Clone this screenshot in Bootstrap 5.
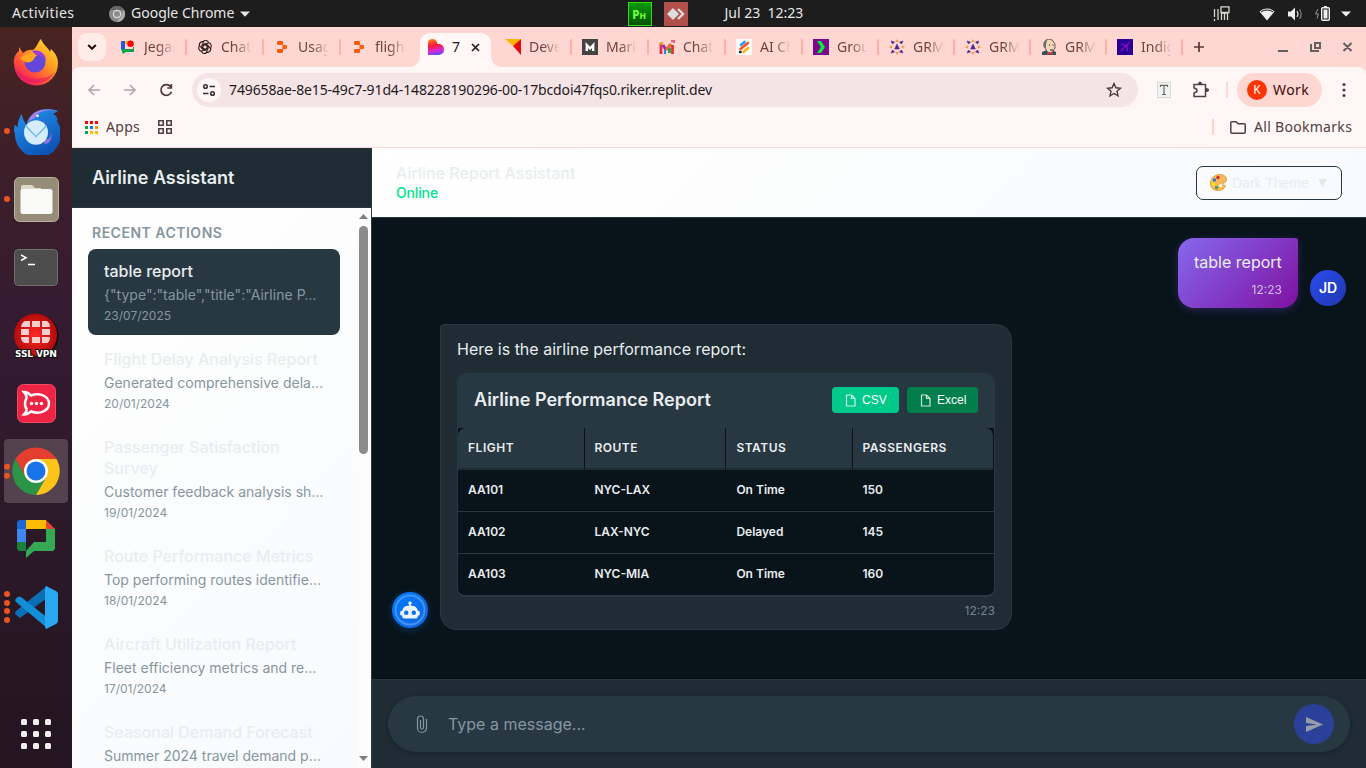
<!DOCTYPE html>
<html lang="en">
<head>
<meta charset="utf-8">
<meta name="viewport" content="width=device-width, initial-scale=1">
<title>Airline Report Assistant</title>
<link href="https://cdn.jsdelivr.net/npm/bootstrap@5.3.0/dist/css/bootstrap.min.css" rel="stylesheet">
<style>
  body{height:768px;font-family:Inter,"Liberation Sans",sans-serif;background:#08131a;color:#e9edef}
  svg{display:block;flex:none}
  .sys{font-family:"Noto Sans","Open Sans",sans-serif}
  /* system bar */
  .topbar{height:27px;background:#1d1d1d;color:#e6e6e6;font-size:14px;line-height:25px;white-space:pre}
  .topbar>*{flex:none}
  .topbar span{padding-bottom:2px}
  /* dock */
  .dock{width:72px;background:linear-gradient(#482421 0,#3e1f29 17%,#351b31 40%,#2c1929 65%,#231521 100%);flex:none}
  .slot{height:68px;width:72px;flex:none;display:flex;align-items:center;justify-content:center;position:relative}
  .slot.on::before{content:"";position:absolute;left:4px;top:2px;width:64px;height:64px;border-radius:4px;background:#54424f}
  .slot svg{position:relative}
  .dots{position:absolute;left:4px;top:50%;transform:translateY(-50%);display:grid;gap:2.6px;z-index:1}
  .dots i{width:6px;height:6px;border-radius:50%;background:#e95420}
  /* tabs */
  .tabs{height:40px;background:#ffd7d2;color:#6f4240;font-size:14px}
  .tb{width:77px;height:40px;padding-left:10px;flex:none;position:relative}
  .tb.n{width:76px}
  .tb b{font-weight:400;width:31px;margin-left:8px;padding-bottom:2px;overflow:hidden;white-space:nowrap;-webkit-mask-image:linear-gradient(90deg,#000 45%,transparent);mask-image:linear-gradient(90deg,#000 45%,transparent)}
  .tb::after{content:"";position:absolute;right:0;top:12px;width:2px;height:16px;background:#ffb0a7;border-radius:1px}
  .tb.x::after{display:none}
  .tb-active{width:71px;height:34px;margin:6px 4px 0 2px;padding:0 0 6px 8px;background:#fff7f5;border-radius:10px 10px 0 0;color:#201a1a;position:relative;flex:none;z-index:1}
  .tb-active::before,.tb-active::after{content:"";position:absolute;bottom:0;width:10px;height:10px}
  .tb-active::before{left:-10px;background:radial-gradient(circle at 0 0,transparent 9.5px,#fff7f5 10px)}
  .tb-active::after{right:-10px;background:radial-gradient(circle at 100% 0,transparent 9.5px,#fff7f5 10px)}
  .drop{width:28px;height:28px;border-radius:9px;background:#ffebe8;margin:0 4px 0 6px}
  .toolwrap{background:#ffd7d2}
  .toolbar{height:81px;background:#fff7f5;border-bottom:1px solid #fad9d6;border-radius:8px 8px 0 0;color:#51403f;font-size:14px}
  .omni{width:946px;height:34px;border-radius:17px;background:#f4e4e6;color:#1f1a1b;padding-left:5px}
  .omni .circ{width:24px;height:24px;border-radius:50%;background:#fff7f5}
  .omni .url{padding:0 0 2px 8px;letter-spacing:-.125px}
  .work{width:85px;height:34px;border-radius:17px;background:#ffd7d2;color:#400a08;padding-left:10px}
  .work em{width:20px;height:20px;border-radius:50%;background:#ff3405;color:#fff;font-size:12px;font-style:normal;margin-right:6px}
  .work span{padding-bottom:2px;letter-spacing:.4px}
  .apps,.allb{padding:0 0 2px 8px}
  .allb{width:120px;letter-spacing:.3px}
  .vsep{width:2px;height:16px;background:#ffd0cb;flex:none}
  /* sidebar */
  .side{width:300px;border-right:1px solid #283842;background:linear-gradient(135deg,#fff,#f8fafc);flex:none}
  .side-head{height:60px;background:#1f2c34;border-bottom:1px solid #283842;padding:0 20px;font-size:18px;font-weight:600;flex:none}
  .side-list{padding:15px 16px 0;width:284px}
  .side-list h2{font-size:14px;font-weight:600;letter-spacing:.5px;line-height:20px;margin:0 0 6px 4px;color:#8696a0}
  .item{width:252px;padding:12px 16px 10px;border-radius:8px;margin-bottom:2px;white-space:nowrap}
  .item.sel{background:#283842}
  .item h3{font-size:16px;font-weight:500;line-height:21px;margin:0 0 2px;color:#e9edef}
  .item p{font-size:14px;line-height:22px;margin:0;color:#8696a0}
  .item.sel p{letter-spacing:.03px}
  .item small{display:block;font-size:12px;line-height:19px;color:#8696a0}
  .sbar{width:15px;background:#fcfcfc}
  .sbar .thumb{width:9px;height:228px;border-radius:5px;background:#8b8b8b;margin-top:4px}
  /* main pane */
  .main-head{height:70px;background:linear-gradient(135deg,#fff,#f8fafc);border-bottom:1px solid #283842;padding:0 24px}
  .main-head h1{font-size:16px;font-weight:500;line-height:20px;margin:0 0 1px;color:#e9edef}
  .main-head .who{padding-bottom:1px}
  .online{font-size:14px;font-weight:500;line-height:18px;color:#00e58d;letter-spacing:-.15px}
  .theme{width:146px;height:34px;border:1px solid #283842;border-radius:7px;font-family:"Liberation Sans",sans-serif;font-size:14px;color:#e9edef;padding-left:13px}
  .theme span{padding:1px 0 0 5px;width:91px}
  .chat{background:#08131a;height:461px;padding:20px 20px 0}
  .bub-me{width:120px;height:70px;padding:12px 16px 0;border-radius:16px 3px 16px 16px;background:linear-gradient(135deg,#8668ee,#7f11a0);box-shadow:0 2px 8px rgba(120,80,230,.3);font-size:16px;line-height:24px}
  .bub-me div{font-size:12px;line-height:18px;margin-top:7px;opacity:.75;text-align:right}
  .ava{width:36px;height:36px;border-radius:50%;flex:none;margin-bottom:2px}
  .ava.me{background:linear-gradient(135deg,#2b4bee,#2038b0);font-size:14px;font-weight:600;color:#fff;padding-bottom:2px}
  .ava.bot{background:linear-gradient(135deg,#007bff,#1266e0);box-shadow:0 2px 8px rgba(0,123,255,.3)}
  .bub-bot{width:572px;height:306px;border:1px solid #283842;border-radius:4px 16px 16px 16px;background:#1f2c34;padding:12px 16px 0;font-size:16px;line-height:24px}
  .rep{margin-top:12px;width:538px;height:224px;border:1px solid #283842;border-bottom-width:2px;border-radius:8px;background:#08131a;overflow:hidden}
  .rep-head{height:54px;background:#283842;padding:0 16px 2px;font-size:18px;font-weight:600}
  .ebtn{height:26px;border-radius:4px;color:#fff;font:400 12px/26px "Liberation Sans",sans-serif;padding-left:13px}
  .rt{width:536px;table-layout:fixed;border-collapse:separate;border-spacing:0;font-size:12px;font-weight:600;color:#e9edef}
  .rt th{height:42px;padding:0 10px;line-height:40px;background:#283842;border-right:1px solid #08131a;border-bottom:2px solid #1f2c34;font-weight:600;letter-spacing:.52px}
  .rt th:first-child{border-top-left-radius:8px}.rt th:last-child{border-top-right-radius:8px}
  .rt td{height:42px;padding:0 10px 2px;line-height:39px;border-bottom:1px solid #283842}
  .rt tr:last-child td{border:0;padding-bottom:3px}
  .rt tr>:nth-child(2),.rt tr>:nth-child(4){padding-left:9.4px}
  .rt tr>:nth-child(3){padding-left:10.4px}
  .tm{font-size:12px;line-height:18px;color:#75848d;text-align:right;margin-top:5px}
  .foot{height:89px;background:#1f2c34;border-top:1px solid #283842;padding:16px 16px 0}
  .pill{height:56px;border-radius:28px;background:#283842;box-shadow:0 1px 4px rgba(0,0,0,.25);padding:0 16px 0 26px;font-size:16px;color:#8696a0}
  .send{width:40px;height:40px;border-radius:50%;background:#2a4099}
</style>
</head>
<body class="overflow-hidden d-flex flex-column m-0">

<header class="topbar sys d-flex align-items-center">
  <span style="width:109px;padding-left:12px;letter-spacing:.4px">Activities</span>
  <svg width="16" height="16" viewBox="0 0 16 16"><circle cx="8" cy="8" r="8" fill="#8a8a8a"/><path d="M1 4a8 8 0 0 1 14 0H8z" fill="#666"/><path d="M8 16l4-6 3-6a8 8 0 0 1-7 12" fill="#aaa"/><circle cx="8" cy="8" r="4.200" fill="#ddd"/><circle cx="8" cy="8" r="3" fill="#8c8c8c"/></svg>
  <span style="width:115px;padding-left:6px">Google Chrome</span>
  <svg width="388" height="6" viewBox="0 0 388 6"><path d="M0 .5h10L5 5.700z" fill="#e6e6e6"/></svg>
  <svg width="24" height="24" viewBox="0 0 24 24"><defs><linearGradient id="ph" x2="0" y2="1"><stop stop-color="#0a9a08"/><stop offset="1" stop-color="#064f05"/></linearGradient></defs><rect x=".5" y=".5" width="23" height="23" fill="url(#ph)" stroke="#2fdc12"/><text x="4.300" y="16.500" font-family="Noto Sans" font-weight="800" font-size="11.500" fill="#6cff3c">P<tspan font-size="8.500">H</tspan></text></svg>
  <svg class="ms-1" width="36" height="24" viewBox="-8 0 36 24"><rect width="24" height="24" fill="#b14f4a"/><path d="M3 12l6-6 6 6-6 6z" fill="#ddd"/><path d="M14 7l5 5-5 5" fill="none" stroke="#ddd" stroke-width="2.400"/></svg>
  <span class="flex-grow-1" style="padding-left:32.500px">Jul 23  12:23</span>
  <svg width="153" height="20" viewBox="1213 3 153 20"><g fill="none" stroke="#d9d6cc" stroke-width="1.300"><path d="M1214.500 8v8M1214.500 18v2M1218 8v11M1221.500 19v-7h6v7M1224.500 19v-7"/><path d="M1221 5.800h8v5.700h-8z" fill="#1d1d1d"/></g><path d="M1259.500 10.500a11 11 0 0 1 15 0l-7.500 9z" fill="#eee"/><path d="M1261 10.800q6-3.600 12 0" fill="none" stroke="#1d1d1d"/><path d="M1288 10.500h3l4-4v13l-4-4h-3z" fill="#eee"/><path d="M1297 10q2 3 0 6" fill="none" stroke="#ccc" stroke-width="1.300"/><path d="M1299.500 8q3.400 5 0 10" fill="none" stroke="#777" stroke-width="1.300"/><path d="M1318 8l-2.500 5h3l-1.500 4.500" fill="none" stroke="#999"/><rect x="1321.700" y="6.700" width="7.600" height="12.600" rx="1" fill="none" stroke="#eee" stroke-width="1.400"/><path d="M1324 5h3v2h-3zM1323.500 8.500h4v9h-4z" fill="#eee"/><path d="M1341 10.500h10l-5 5z" fill="#eee"/></svg>
</header>

<div class="d-flex flex-grow-1 overflow-hidden">

<nav class="dock">
  <div class="slot" style="height:70px"><svg width="46" height="48" viewBox="0 0 46 48"><defs><linearGradient id="ff" x1="1" x2=".2" y2="1"><stop stop-color="#ffe93a"/><stop offset=".45" stop-color="#ff9a22"/><stop offset=".75" stop-color="#ff4a3c"/><stop offset="1" stop-color="#e2126e"/></linearGradient></defs><path d="M28 1c2 6 8 9 9 13l1-3c4 4 7 8 7 14a22 22 0 0 1-44 1C0 20 3 15 6 13V9l4 6q5-4 9-3c4 0 5-7 9-11z" fill="url(#ff)"/><circle cx="22" cy="24" r="10.500" fill="#6547d8"/><path d="M14 16c7-5 15-2 17 2-5-3-9 0-10 3-3 5-10 4-13 0-2-1 2-3 6-5z" fill="#ffa51f"/><path d="M19 13c8-2 14 3 14 10-3-5-6-6-10-6z" fill="#9d3de0"/><path d="M2 30a22 22 0 0 0 40 4C34 43 12 44 2 30" fill="#e5156c" opacity=".6"/></svg></div>
  <div class="slot"><span class="dots"><i></i></span><svg width="48" height="47" viewBox="0 0 50 48" preserveAspectRatio="none"><defs><linearGradient id="tbd" x2=".5" y2="1"><stop stop-color="#2795ef"/><stop offset="1" stop-color="#0c54b5"/></linearGradient></defs><path d="M10 6c1 5 3 8 5 11C18 3 33-2 48 3l-5 3c3 2 4 3 5 7l-2-1a24 24 0 1 1-43 14c-2-4 0-9 0-9l3 3c0-6 1-9 4-14z" fill="url(#tbd)"/><path d="M17 14C20 3 33-1 47 3 35 1 27 4 24 10z" fill="#a77ce6"/><path d="M33 31c6 3 8-2 7-7 3 6 0 12-6 13z" fill="#9273de"/><circle cx="25" cy="25" r="12.500" fill="#d4ecfb"/><path d="M14 18l11 11 11-11" fill="none" stroke="#7eb9e9" stroke-width="1.500"/><circle cx="26.500" cy="8" r="1.400" fill="#fff"/></svg></div>
  <div class="slot"><span class="dots"><i></i></span><svg width="45" height="45" viewBox="0 0 45 45"><rect x=".5" y=".5" width="44" height="44" rx="5" fill="#968d78" stroke="#b8b09c"/><path d="M7 16v-6q0-2 2-2h9l3 3h6v6z" fill="#ded9c9"/><rect x="6.500" y="12" width="32" height="25" rx="2.500" fill="#fafaf8"/></svg></div>
  <div class="slot"><svg width="44" height="37" viewBox="0 0 44 37"><rect x=".5" y=".5" width="43" height="36" rx="4" fill="#4d4d4d" stroke="#707070"/><path d="M7 6l5 2.700L7 11.500M14 15.500h7" fill="none" stroke="#fff" stroke-width="1.500"/></svg></div>
  <div class="slot"><svg width="50" height="48" viewBox="0 0 50 48"><defs><radialGradient id="vp"><stop stop-color="#ff2929"/><stop offset="1" stop-color="#b30b0b"/></radialGradient></defs><circle cx="25.500" cy="25" r="22" fill="#111"/><circle cx="24.500" cy="24" r="21.500" fill="url(#vp)"/><g fill="#f5cfcd"><path d="M14 10h5v6h-9q1-5 4-6M21 10h8v6h-8zM31 10h5q3 2 3 6h-8zM10 18h8v6h-8zM31 18h8v6h-8zM10 26h8v6h-4q-4-1-4-6M31 26h8q0 5-3 6h-5zM21 26h8v6h-8z"/></g><text x="25" y="45.500" text-anchor="middle" textLength="42" font-family="DejaVu Sans" font-weight="700" font-size="9.200" fill="#fff" stroke="#111" stroke-width="2" paint-order="stroke">SSL VPN</text></svg></div>
  <div class="slot"><svg width="39" height="39" viewBox="0 0 39 39"><rect x=".5" y=".5" width="38" height="38" rx="6" fill="#ed2443" stroke="#f24a60"/><path d="M7 8q4 0 7 3.500C24 8 32 13 32 19.500S24 31 14 27.500Q10 31 7 30.500 10 28 9.500 25q-3-5 0-11Q10 11 7 8z" fill="none" stroke="#fff" stroke-width="2.500"/><g fill="#fff"><circle cx="14.500" cy="19.500" r="1.700"/><circle cx="19.500" cy="19.500" r="1.700"/><circle cx="24.500" cy="19.500" r="1.700"/></g></svg></div>
  <div class="slot on"><span class="dots"><i></i><i></i></span><svg width="48" height="48" viewBox="0 0 48 48"><path d="M3.500 12a24 24 0 0 1 41 0H24L13.600 30z" fill="#e33e2f"/><path d="M3.500 12A24 24 0 0 0 24 48l10.400-18H13.600z" fill="#2b9447"/><path d="M44.500 12A24 24 0 0 1 24 48l10.400-18L24 12z" fill="#fcc419"/><circle cx="24" cy="24" r="12" fill="#fff"/><circle cx="24" cy="24" r="9.500" fill="#1a73e8"/></svg></div>
  <div class="slot"><svg width="38" height="38" viewBox="0 0 38 38"><path d="M2 0h7v9H0V2z" fill="#1967d2"/><path d="M9 0h20v9H9z" fill="#fbbc04"/><path d="M29 0l9 9h-9z" fill="#ea4335"/><path d="M0 9h9v13H0z" fill="#4285f4"/><path d="M0 22h9v9H2l-2-2z" fill="#188038"/><path d="M29 9h9v20l-2 2H17l-8 7V31l8-9h12z" fill="#34a853"/></svg></div>
  <div class="slot"><span class="dots"><i></i><i></i><i></i><i></i></span><svg width="43" height="43" viewBox="0 0 43 43"><path d="M0 28l5 4L36 9 32 0 1 25q-1 2-1 3" fill="#0a6fb5"/><path d="M0 14q3-5 6-3l28 22-2 9L1 16z" fill="#128fd8"/><path d="M31 0l10 5q2 1 2 3v27q0 2-2 3l-10 5q-1-1-1-3V3q0-2 1-3" fill="#29a8f1"/></svg></div>
  <div class="slot" style="margin-top:59px"><svg width="30" height="30" viewBox="0 0 30 30" fill="#f0eeec"><g id="r"><rect width="6" height="6" rx="1.500"/><rect x="12" width="6" height="6" rx="1.500"/><rect x="24" width="6" height="6" rx="1.500"/></g><use href="#r" y="12"/><use href="#r" y="24"/></svg></div>
</nav>

<div class="flex-grow-1 d-flex flex-column" style="width:1294px">

<div class="tabs sys d-flex align-items-center">
  <div class="drop d-flex align-items-center justify-content-center flex-shrink-0"><svg width="10" height="6" viewBox="0 0 10 6"><path d="M1.200 1L5 4.800 8.800 1" fill="none" stroke="#201010" stroke-width="2"/></svg></div>
  <div class="tb d-flex align-items-center"><svg width="16" height="16" viewBox="0 0 16 16"><path d="M1 2h4v9H1z" fill="#2a56e8"/><path d="M5 2h4v3H5z" fill="#fbbc04"/><path d="M1 10h12V8h1v5H6l-3 2z" fill="#12a24b"/><circle cx="10.500" cy="4.800" r="3.300" fill="#f00"/></svg><b>Jegan</b></div>
  <div class="tb d-flex align-items-center"><svg width="16" height="16" viewBox="-8 -8 16 16" fill="none" stroke="#2a1c1c" stroke-width="1.200"><g id="k" transform="scale(.92)"><path d="M-2.200-1.300V-4.500Q-2-7 .5-7T4-4.800M-2.200-1.300L1-3.200 4-1.500"/></g><use href="#k" transform="rotate(60)"/><use href="#k" transform="rotate(120)"/><use href="#k" transform="rotate(180)"/><use href="#k" transform="rotate(240)"/><use href="#k" transform="rotate(300)"/></svg><b>ChatG</b></div>
  <div class="tb d-flex align-items-center"><svg width="16" height="16" viewBox="0 0 16 16" fill="#ff5a0a"><path d="M4 2h4q1 0 1 1v3H4Q3 6 3 5V3q0-1 1-1M8.500 6H12q1 0 1 1v2q0 1-1 1H8.500zM4 10h5v3q0 1-1 1H4q-1 0-1-1v-2q0-1 1-1"/></svg><b>Usage</b></div>
  <div class="tb x d-flex align-items-center"><svg width="16" height="16" viewBox="0 0 16 16" fill="#ff5a0a"><path d="M4 2h4q1 0 1 1v3H4Q3 6 3 5V3q0-1 1-1M8.500 6H12q1 0 1 1v2q0 1-1 1H8.500zM4 10h5v3q0 1-1 1H4q-1 0-1-1v-2q0-1 1-1"/></svg><b>flight-</b></div>
  <div class="tb-active d-flex align-items-center align-self-start"><svg width="16" height="16" viewBox="0 0 16 16"><defs><linearGradient id="lv" x1=".3" x2=".5" y2="1"><stop stop-color="#ff7a1a"/><stop offset=".4" stop-color="#fb1a3c"/><stop offset=".75" stop-color="#d32bd8"/><stop offset="1" stop-color="#5f4bff"/></linearGradient></defs><path d="M0 16V4q0-4 4.500-4 4 0 5 5H12q4 1 4 5.500T11 16z" fill="url(#lv)"/></svg><span class="ms-2" style="width:19px;padding-bottom:2px">7</span><svg width="9" height="9" viewBox="0 0 9 9"><path d="M1 1l7 7M8 1L1 8" stroke="#2a1a1a" stroke-width="1.700"/></svg></div>
  <div class="tb d-flex align-items-center"><svg width="16" height="16" viewBox="0 0 16 16"><path d="M0 0h16L8 7z" fill="#fcb400"/><path d="M16 0v16L8 7z" fill="#e60b0b"/></svg><b>Devel</b></div>
  <div class="tb d-flex align-items-center"><svg width="16" height="16" viewBox="0 0 16 16"><path d="M0 0h16v16H0z" fill="#444"/><path d="M4.800 12V6L8 9.500 11.200 6v6" fill="none" stroke="#fff" stroke-width="2.400"/></svg><b>Markd</b></div>
  <div class="tb d-flex align-items-center"><svg width="16" height="16" viewBox="0 0 16 16" fill="none" stroke-width="2.800"><path d="M2 15V4" stroke="#e42c4c"/><path d="M1 4l3 1" stroke="#f39a12"/><path d="M4 6l3 5" stroke="#8b2bc4"/><path d="M7 11l5-6" stroke="#f0642a"/><path d="M10.500 14V9" stroke="#1aa64c"/><path d="M13.500 15V6" stroke="#e4332d"/><path d="M6 15v-4" stroke="#1b90e0" stroke-width="2"/><path d="M12 2h2M15 4V1" stroke="#d63a6a" stroke-width="1.500"/></svg><b>Chatb</b></div>
  <div class="tb d-flex align-items-center"><svg width="16" height="16" viewBox="0 0 16 16" stroke-width="2.600" stroke-linecap="round"><path d="M0 0h16v16H0z" fill="#fff"/><path d="M5 6l3.500-3" stroke="#2498f2"/><path d="M4.500 10L12 4" stroke="#f7531d"/><path d="M7.500 13L12 9" stroke="#ffb40a"/><path d="M4 13h.5" stroke="#223"/></svg><b>AI Cha</b></div>
  <div class="tb n d-flex align-items-center"><svg width="16" height="16" viewBox="0 0 16 16"><path d="M0 0h16v16H0z" fill="#7d0789"/><path d="M4 2h4l4 6-4 6H4l4-6z" fill="#06ee39"/></svg><b>Group</b></div>
  <div class="tb n d-flex align-items-center"><svg width="16" height="16" viewBox="-8 -8 16 16"><g id="gr"><path d="M0-8l1.800 3h-3.600zM0 8l1.800-3h-3.600zM-8 0l3-1.800v3.600zM8 0L5-1.800v3.600z" fill="#fb9a3c"/><path d="M-6-6l3.500 1-2 2zM6-6l-3.500 1 2 2zM-6 6l3.500-1-2-2zM6 6l-3.500-1 2-2zM0-3l2.300 5h-4.600z" fill="#492a91" stroke="#492a91" stroke-width=".6"/></g></svg><b>GRM</b></div>
  <div class="tb n d-flex align-items-center"><svg width="16" height="16" viewBox="-8 -8 16 16"><use href="#gr"/></svg><b>GRM</b></div>
  <div class="tb n d-flex align-items-center"><svg width="16" height="16" viewBox="0 0 16 16"><path d="M1 16v-3l5-2h5l4 2v3z" fill="#335061"/><path d="M3 5q1-5 5-5t6 5v4q-2 5-5 5T4 9z" fill="#f0d6b7" stroke="#4a3a33" stroke-width=".8"/><path d="M2.500 8V4q1-3 4-3.500L5 5v4z" fill="#6d6b6d"/><path d="M6 13l3 1 3-1v3l-3-1-3 1z" fill="#d33833"/><path d="M8 6h1M11.500 6h1M9 11h3" stroke="#222"/></svg><b>GRM</b></div>
  <div class="tb n d-flex align-items-center"><svg width="16" height="16" viewBox="0 0 16 16"><path d="M0 0h16v16H0z" fill="#2a0096"/><path d="M12.500 3.500L4 12M4 5.500l6 1 .5 6" fill="none" stroke="#8c0fba" stroke-width="1.200"/></svg><b>Indigo</b></div>
  <svg class="flex-grow-1" height="40" viewBox="0 0 183 40" preserveAspectRatio="xMinYMid"><path d="M11 20h10M16 15v10" stroke="#5d3432" stroke-width="1.700"/><g stroke="#646060" stroke-width="2" fill="none"><path d="M95 24h10M128 17v7h8"/><path d="M132 16h5v5h-5zM160.500 16l8 8M168.500 16l-8 8"/></g></svg>
</div>

<div class="toolwrap"><div class="toolbar sys">
  <div class="d-flex align-items-center" style="height:46px">
    <svg width="120" height="20" viewBox="72 80 120 20" fill="none" stroke-width="1.600"><path d="M100 90H89M94 85l-5 5 5 5M124 90h11M130 85l5 5-5 5" stroke="#b3a5a5"/><path d="M170.500 86.500a5.400 5.400 0 1 0 1 5.200M171.300 84v4h-4" stroke="#513434" stroke-width="1.700"/></svg>
    <div class="omni d-flex align-items-center flex-shrink-0">
      <span class="circ d-flex align-items-center justify-content-center"><svg width="14" height="14" viewBox="0 0 14 14" fill="none" stroke="#3a2c2c" stroke-width="1.500"><circle cx="3.500" cy="3.500" r="1.800"/><path d="M7.500 3.500H13M1 10.500h5.500"/><circle cx="10.500" cy="10.500" r="1.800"/></svg></span>
      <span class="url flex-grow-1">749658ae-8e15-49c7-91d4-148228190296-00-17bcdoi47fqs0.riker.replit.dev</span>
      <svg width="16" height="16" style="margin-right:16px" viewBox="0 0 16 16"><path d="M8 1.500l1.900 4.300 4.600.4-3.500 3.100 1 4.600L8 11.500l-4 2.400 1-4.600L1.500 6.200l4.600-.4z" fill="none" stroke="#4b3a3b" stroke-width="1.400"/></svg>
    </div>
    <svg width="99" height="24" viewBox="1138 78 99 24"><rect x="1157.500" y="82.500" width="13" height="15" fill="#f2f4f4" stroke="#d5dadb"/><path d="M1160.500 87v-1.700h7V87M1164 85v9M1162 94.500h4" fill="none" stroke="#666" stroke-width="1.200"/><path d="M1194 84.500h11.500v12H1194v-3.500q3-.5 3-2.500t-3-2.500z" fill="none" stroke="#51403f" stroke-width="1.500" stroke-linejoin="round"/><path d="M1198 84q0-2.500 2-2.500t2 2.500zM1206 88q3 0 3 2t-3 2z" fill="#51403f"/><path d="M1226 82h2v16h-2z" fill="#ffd7d2"/></svg>
    <div class="work d-flex align-items-center flex-shrink-0"><em class="d-flex align-items-center justify-content-center">K</em><span>Work</span></div>
    <svg width="44" height="20" viewBox="0 0 44 20" fill="#51403f"><circle cx="22" cy="4.500" r="1.600"/><circle cx="22" cy="10" r="1.600"/><circle cx="22" cy="15.500" r="1.600"/></svg>
  </div>
  <div class="d-flex align-items-center" style="height:28px;padding-left:13px">
    <svg width="13" height="13" viewBox="0 0 13 13"><path d="M0 0h3v3H0zM5 0h3v3H5zM10 0h3v3h-3z" fill="#f00"/><path d="M0 5h3v3H0z" fill="#00a84f"/><path d="M5 5h3v3H5z" fill="#1a73e8"/><path d="M10 5h3v3h-3z" fill="#fb9d00"/><path d="M0 10h3v3H0z" fill="#00a84f"/><path d="M5 10h3v3H5zM10 10h3v3h-3z" fill="#ffb800"/></svg>
    <span class="apps" style="width:60px;letter-spacing:.3px">Apps</span>
    <svg width="14" height="14" viewBox="0 0 14 14" fill="none" stroke="#51403f" stroke-width="1.600"><path d="M.8.800h4.400v4.400H.8zM8.800.800h4.400v4.400H8.800zM.8 8.800h4.400v4.400H.8zM8.800 8.800h4.400v4.400H8.800z"/></svg>
    <i class="vsep ms-auto"></i>
    <svg width="16" height="13" style="margin-left:16px" viewBox="0 0 16 13"><path d="M.8 10.500v-8.700q0-1 1-1H6L8 2.800h6.200q1 0 1 1v7.400q0 1-1 1H1.800q-1 0-1-1z" fill="none" stroke="#51403f" stroke-width="1.500"/></svg>
    <span class="allb text-nowrap">All Bookmarks</span>
  </div>
</div></div>

<div class="d-flex flex-grow-1 overflow-hidden">
  <aside class="side d-flex flex-column">
    <div class="side-head d-flex align-items-center">Airline Assistant</div>
    <div class="d-flex flex-grow-1 overflow-hidden">
      <div class="side-list">
        <h2>RECENT ACTIONS</h2>
        <div class="item sel"><h3>table report</h3><p>{"type":"table","title":"Airline P…</p><small>23/07/2025</small></div>
        <div class="item"><h3>Flight Delay Analysis Report</h3><p>Generated comprehensive dela…</p><small>20/01/2024</small></div>
        <div class="item"><h3>Passenger Satisfaction<br>Survey</h3><p>Customer feedback analysis sh…</p><small>19/01/2024</small></div>
        <div class="item"><h3>Route Performance Metrics</h3><p>Top performing routes identifie…</p><small>18/01/2024</small></div>
        <div class="item"><h3>Aircraft Utilization Report</h3><p>Fleet efficiency metrics and re…</p><small>17/01/2024</small></div>
        <div class="item"><h3>Seasonal Demand Forecast</h3><p>Summer 2024 travel demand p…</p></div>
      </div>
      <div class="sbar d-flex flex-column align-items-center">
        <svg width="9" height="5" style="margin-top:6px;margin-bottom:3px" viewBox="0 0 9 5"><path d="M0 5l4.500-5L9 5z" fill="#7f7f7f"/></svg>
        <div class="thumb"></div>
        <svg class="mt-auto" width="9" height="5" style="margin-bottom:7px" viewBox="0 0 9 5"><path d="M0 0h9L4.500 5z" fill="#7f7f7f"/></svg>
      </div>
    </div>
  </aside>

  <main class="flex-grow-1 d-flex flex-column">
    <div class="main-head d-flex align-items-center justify-content-between">
      <div class="who"><h1>Airline Report Assistant</h1><div class="online">Online</div></div>
      <div class="theme d-flex align-items-center">
        <svg width="17" height="17" viewBox="0 0 17 17"><path d="M9 .5c5-.5 8 2.500 7.500 6-.5 2-2.500 2-3.500 3s.5 2 2 2-1 5-7 5-8-4-7.500-8S4 1 9 .5z" fill="#f5b95c" stroke="#d99432" stroke-width=".8"/><circle cx="8" cy="3.500" r="1.700" fill="#d8232a"/><circle cx="4.400" cy="6" r="1.700" fill="#2f6fc4"/><circle cx="3.300" cy="10" r="1.700" fill="#ffea1c"/><circle cx="6.500" cy="13.500" r="1.700" fill="#3fa648"/><circle cx="10.800" cy="11.500" r="1.500" fill="#fff"/></svg>
        <span class="text-nowrap">Dark Theme</span>
        <svg width="9" height="8" viewBox="0 0 9 8"><path d="M0 0h9L4.500 8z" fill="#e4e8ea"/></svg>
      </div>
    </div>
    <div class="chat">
      <div class="d-flex justify-content-end align-items-end" style="gap:12px">
        <div class="bub-me">table report<div>12:23</div></div>
        <div class="ava me d-flex align-items-center justify-content-center">JD</div>
      </div>
      <div class="d-flex align-items-end" style="gap:12px;margin-top:16px">
        <div class="ava bot"><svg width="36" height="36" viewBox="0 0 36 36"><circle cx="18" cy="18" r="14.500" fill="none" stroke="#fff" stroke-opacity=".25" stroke-width="1.800"/><path d="M18 9.500a1.600 1.600 0 0 1 .9 3v1.300h.6a6.500 6.500 0 0 1 6.400 5.200h.6q1.300 0 1.300 1.300v2q0 1.300-1.300 1.300h-.7v1q0 1.900-1.900 1.900H12.100q-1.900 0-1.900-1.900v-1h-.7q-1.300 0-1.300-1.300v-2q0-1.300 1.300-1.300h.6a6.500 6.500 0 0 1 6.400-5.200h.6v-1.300a1.600 1.600 0 0 1 .9-3z" fill="#edf4ff"/><circle cx="14.200" cy="20.800" r="2.200" fill="#0b70ee"/><circle cx="21.800" cy="20.800" r="2.200" fill="#0b70ee"/></svg></div>
        <div class="bub-bot">Here is the airline performance report:
          <div class="rep">
            <div class="rep-head d-flex align-items-center"><span class="me-auto">Airline Performance Report</span>
              <div class="ebtn d-flex align-items-center" style="width:67px;background:#00c98a"><svg width="12" height="13" viewBox="0 0 12 13"><path d="M1.500 1h5L10 4.500V12H1.500zM6.500 1v3.500H10" fill="none" stroke="#fff" stroke-opacity=".8" stroke-width="1.200"/></svg><span style="padding-left:5px">CSV</span></div>
              <div class="ebtn d-flex align-items-center ms-2" style="width:71px;background:#027d4c"><svg width="12" height="13" viewBox="0 0 12 13"><path d="M1.500 1h5L10 4.500V12H1.500zM6.500 1v3.500H10" fill="none" stroke="#fff" stroke-opacity=".8" stroke-width="1.200"/></svg><span style="padding-left:5px">Excel</span></div>
            </div>
            <table class="rt">
              <colgroup><col style="width:127px"><col style="width:141px"><col style="width:127px"><col style="width:141px"></colgroup>
              <tr><th>FLIGHT</th><th>ROUTE</th><th>STATUS</th><th>PASSENGERS</th></tr>
              <tr><td>AA101</td><td>NYC-LAX</td><td>On Time</td><td>150</td></tr>
              <tr><td>AA102</td><td>LAX-NYC</td><td>Delayed</td><td>145</td></tr>
              <tr><td>AA103</td><td>NYC-MIA</td><td>On Time</td><td>160</td></tr>
            </table>
          </div>
          <div class="tm">12:23</div>
        </div>
      </div>
    </div>
    <div class="foot">
      <div class="pill d-flex align-items-center">
        <svg width="16" height="20" viewBox="0 0 16 20"><path d="M12.500 5v9a4.500 4.500 0 0 1-9 0V5a3 3 0 0 1 6 0v8.500a1.500 1.500 0 0 1-3 0V6" fill="none" stroke="#8696a0" stroke-width="1.200"/></svg>
        <span class="flex-grow-1" style="padding-left:18px">Type a message...</span>
        <span class="send d-flex align-items-center justify-content-center"><svg width="17" height="15" viewBox="0 0 17 15"><path d="M0 0l17 7.500L0 15V9l11-1.500L0 6z" fill="#959da8"/></svg></span>
      </div>
    </div>
  </main>
</div>
</div>
</div>
<script src="https://cdn.jsdelivr.net/npm/bootstrap@5.3.0/dist/js/bootstrap.bundle.min.js"></script>
</body>
</html>
